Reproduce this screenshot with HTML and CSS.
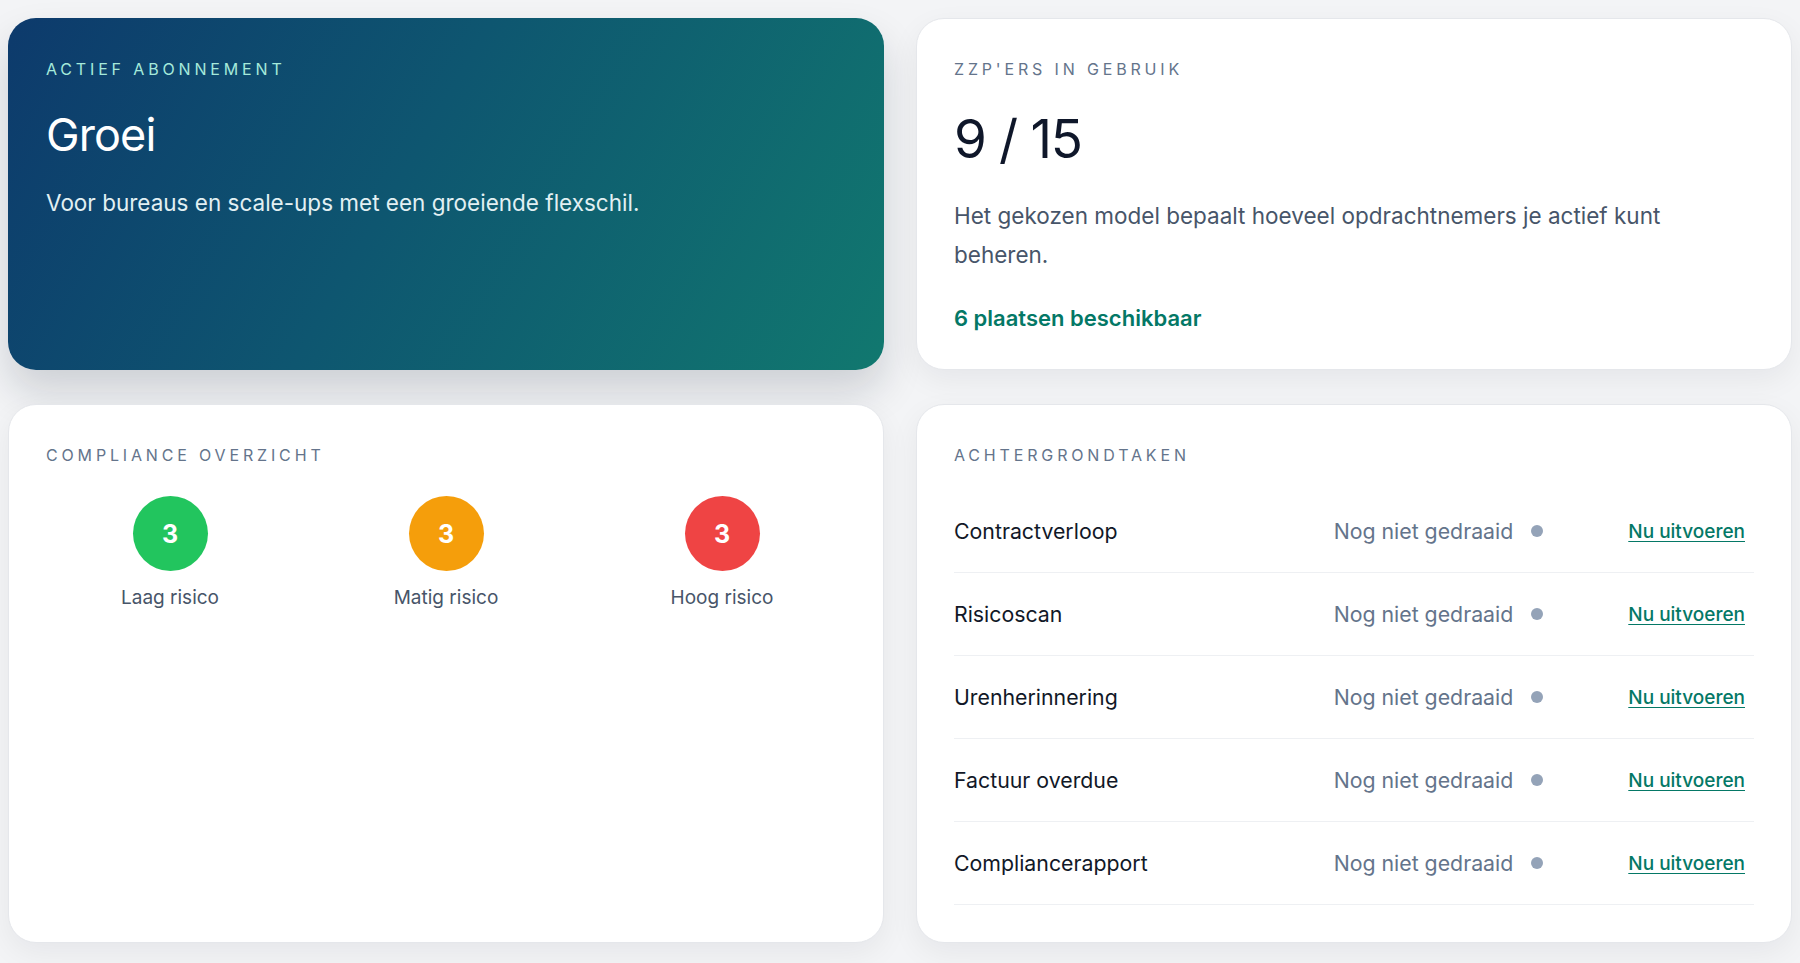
FILE: index.html
```html
<!DOCTYPE html>
<html lang="nl">
<head>
<meta charset="utf-8">
<title>Dashboard</title>
<link rel="stylesheet" href="styles.css">
</head>
<body>
<main class="dashboard">
  <section class="card card-plan">
    <div class="eyebrow eyebrow-light">Actief abonnement</div>
    <h1 class="plan-name">Groei</h1>
    <p class="plan-desc">Voor bureaus en scale-ups met een groeiende flexschil.</p>
  </section>

  <section class="card">
    <div class="eyebrow">ZZP'ers in gebruik</div>
    <div class="usage">9 / 15</div>
    <p class="usage-desc">Het gekozen model bepaalt hoeveel opdrachtnemers je actief kunt beheren.</p>
    <div class="usage-free">6 plaatsen beschikbaar</div>
  </section>

  <section class="card">
    <div class="eyebrow">Compliance overzicht</div>
    <div class="risk-grid">
      <div class="risk">
        <div class="risk-badge risk-low">3</div>
        <div class="risk-label">Laag risico</div>
      </div>
      <div class="risk">
        <div class="risk-badge risk-mid">3</div>
        <div class="risk-label">Matig risico</div>
      </div>
      <div class="risk">
        <div class="risk-badge risk-high">3</div>
        <div class="risk-label">Hoog risico</div>
      </div>
    </div>
  </section>

  <section class="card">
    <div class="eyebrow">Achtergrondtaken</div>
    <ul class="tasks">
      <li class="task">
        <span class="task-name">Contractverloop</span>
        <span class="task-status">Nog niet gedraaid<span class="dot"></span></span>
        <a class="task-run" href="#">Nu uitvoeren</a>
      </li>
      <li class="task">
        <span class="task-name">Risicoscan</span>
        <span class="task-status">Nog niet gedraaid<span class="dot"></span></span>
        <a class="task-run" href="#">Nu uitvoeren</a>
      </li>
      <li class="task">
        <span class="task-name">Urenherinnering</span>
        <span class="task-status">Nog niet gedraaid<span class="dot"></span></span>
        <a class="task-run" href="#">Nu uitvoeren</a>
      </li>
      <li class="task">
        <span class="task-name">Factuur overdue</span>
        <span class="task-status">Nog niet gedraaid<span class="dot"></span></span>
        <a class="task-run" href="#">Nu uitvoeren</a>
      </li>
      <li class="task">
        <span class="task-name">Compliancerapport</span>
        <span class="task-status">Nog niet gedraaid<span class="dot"></span></span>
        <a class="task-run" href="#">Nu uitvoeren</a>
      </li>
    </ul>
  </section>
</main>
</body>
</html>
```

FILE: styles.css
```css
* { box-sizing: border-box; }

html, body {
  margin: 0;
  padding: 0;
  background: #f3f4f6;
  font-family: Inter, "Noto Sans", "Liberation Sans", sans-serif;
  color: #0f172a;
}

.dashboard {
  display: grid;
  grid-template-columns: 1fr 1fr;
  column-gap: 32px;
  row-gap: 34px;
  padding: 18px 8px 20px;
}

.card {
  background: #ffffff;
  border: 1px solid #e5e7eb;
  border-radius: 28px;
  padding: 37px 37px;
  box-shadow: 0 10px 30px rgba(15, 23, 42, 0.06);
}

.card-plan {
  border: none;
  padding: 38px;
  background: linear-gradient(120deg, #0d3a6c 0%, #0e5670 45%, #11786f 100%);
  box-shadow: 0 22px 40px rgba(15, 23, 42, 0.16);
  color: #ffffff;
}

.eyebrow {
  font-size: 16px;
  line-height: 26px;
  letter-spacing: 0.24em;
  text-transform: uppercase;
  color: #64748b;
}

.eyebrow-light { color: #a5eadb; }

.plan-name {
  margin: 26px 0 0;
  font-size: 45px;
  line-height: 54px;
  font-weight: 400;
  letter-spacing: -0.02em;
}

.plan-desc {
  margin: 25px 0 0;
  font-size: 22.5px;
  line-height: 32px;
  color: #e2f0f3;
}

.usage {
  margin-top: 29px;
  font-size: 53px;
  line-height: 56px;
  letter-spacing: -0.025em;
  color: #0f172a;
}

.usage-desc {
  margin: 29px 0 0;
  max-width: 760px;
  font-size: 22.5px;
  line-height: 39px;
  color: #475569;
}

.usage-free {
  margin-top: 30px;
  font-size: 22px;
  line-height: 28px;
  font-weight: 600;
  color: #047866;
}

.risk-grid {
  display: grid;
  grid-template-columns: repeat(3, 1fr);
  column-gap: 28px;
  margin-top: 28px;
}

.risk {
  display: flex;
  flex-direction: column;
  align-items: center;
}

.risk-badge {
  width: 75px;
  height: 75px;
  border-radius: 50%;
  display: flex;
  align-items: center;
  justify-content: center;
  color: #ffffff;
  font-size: 25px;
  font-weight: 700;
}

.risk-low { background: #22c55e; }
.risk-mid { background: #f59e0b; }
.risk-high { background: #ef4444; }

.risk-label {
  margin-top: 13px;
  font-size: 19px;
  line-height: 28px;
  color: #475569;
}

.tasks {
  list-style: none;
  margin: 22px 0 0;
  padding: 0;
}

.task {
  display: grid;
  grid-template-columns: 1fr auto auto;
  align-items: center;
  height: 83px;
  border-bottom: 1px solid #eef0f3;
  padding-right: 9px;
}

.task-name {
  font-size: 21.3px;
  color: #111827;
}

.task-status {
  display: flex;
  align-items: center;
  gap: 18px;
  font-size: 21.3px;
  color: #64748b;
}

.dot {
  width: 12px;
  height: 12px;
  border-radius: 50%;
  background: #94a3b8;
}

.task-run {
  margin-left: 85px;
  font-size: 19px;
  font-weight: 500;
  color: #047866;
  text-decoration: underline;
  text-underline-offset: 3px;
}
```
